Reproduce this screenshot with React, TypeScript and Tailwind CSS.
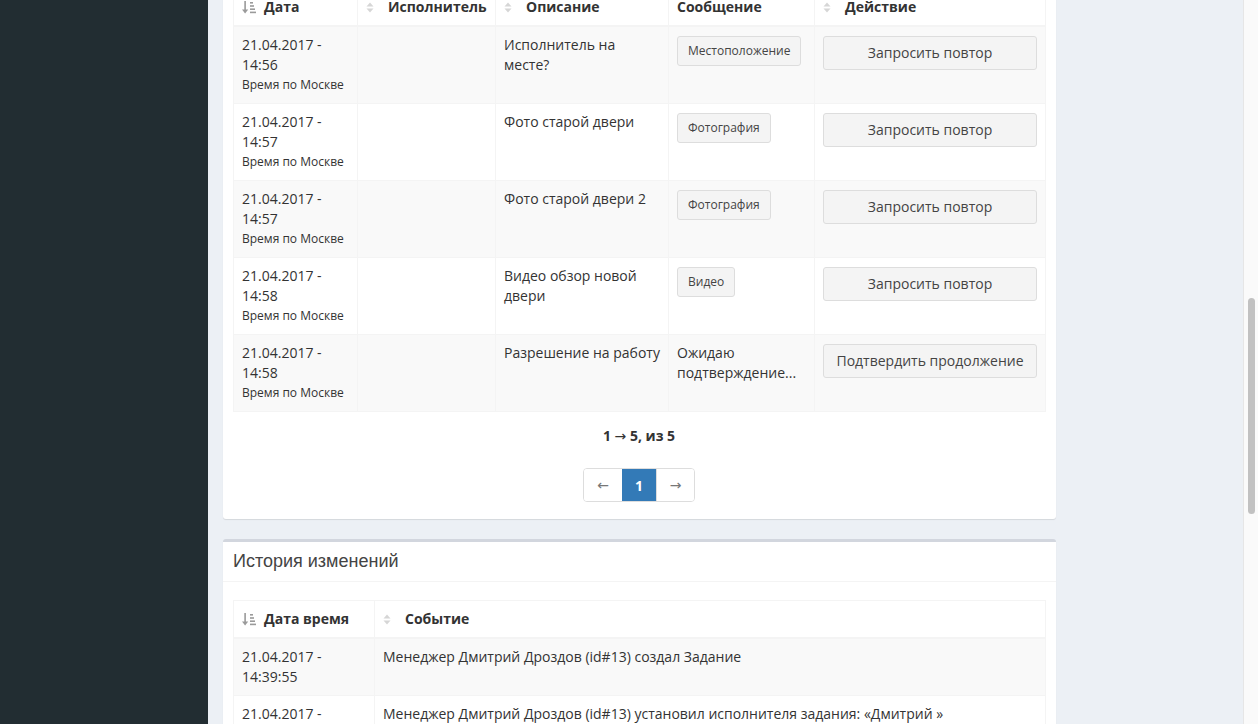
import React from "react";

const SortAsc = () => (
  <svg width="14" height="13" viewBox="0 0 14 13" className="shrink-0">
    <rect x="2.3" y="0" width="1.6" height="9" fill="#9a9a9a" />
    <polygon points="0,8.5 6.2,8.5 3.1,12.5" fill="#9a9a9a" />
    <rect x="8" y="1" width="3" height="1.6" fill="#9a9a9a" />
    <rect x="8" y="4.2" width="4" height="1.6" fill="#9a9a9a" />
    <rect x="8" y="7.4" width="5" height="1.6" fill="#9a9a9a" />
    <rect x="8" y="10.6" width="6" height="1.6" fill="#9a9a9a" />
  </svg>
);

const SortBoth = () => (
  <svg width="14" height="13" viewBox="0 0 14 13" className="shrink-0">
    <polygon points="0.5,5.5 7.5,5.5 4,1.5" fill="#d6d6d6" />
    <polygon points="0.5,7.5 7.5,7.5 4,11.5" fill="#d6d6d6" />
  </svg>
);

type Row = {
  time: string;
  desc: string[];
  msgBtn?: string;
  msgText?: string[];
  action: string;
};

const rows: Row[] = [
  { time: "14:56", desc: ["Исполнитель на", "месте?"], msgBtn: "Местоположение", action: "Запросить повтор" },
  { time: "14:57", desc: ["Фото старой двери"], msgBtn: "Фотография", action: "Запросить повтор" },
  { time: "14:57", desc: ["Фото старой двери 2"], msgBtn: "Фотография", action: "Запросить повтор" },
  { time: "14:58", desc: ["Видео обзор новой", "двери"], msgBtn: "Видео", action: "Запросить повтор" },
  { time: "14:58", desc: ["Разрешение на работу"], msgText: ["Ожидаю", "подтверждение..."], action: "Подтвердить продолжение" },
];

const th = "border border-[#f4f4f4] border-b-2 px-[8px] py-[8px] text-left font-bold align-bottom leading-[20px]";
const td = "border border-[#f4f4f4] px-[8px] pt-[8px] pb-[8px] align-top leading-[20px]";

export default function App() {
  return (
    <div className="flex h-[724px] w-full overflow-hidden font-['Open_Sans',sans-serif] text-[14px] text-[#333]">
      <div className="w-[208px] shrink-0 bg-[#222d32]" />
      <div className="flex-1 bg-[#ecf0f5] pl-[15px] overflow-hidden">
        {/* Card 1 */}
        <div className="mt-[-22px] w-[833px] rounded-[3px] bg-white py-[10px] pl-[10px] pr-[11px] pb-[17px] shadow-[0_1px_1px_rgba(0,0,0,0.1)]">
          <table className="w-[812px] table-fixed border-collapse">
            <colgroup>
              <col className="w-[124px]" />
              <col className="w-[138px]" />
              <col className="w-[173px]" />
              <col className="w-[146px]" />
              <col className="w-[231px]" />
            </colgroup>
            <thead>
              <tr className="bg-white">
                <th className={th}>
                  <div className="flex items-center gap-[8px]"><SortAsc /><span>Дата</span></div>
                </th>
                <th className={th}>
                  <div className="flex items-center gap-[8px]"><SortBoth /><span>Исполнитель</span></div>
                </th>
                <th className={th}>
                  <div className="flex items-center gap-[8px]"><SortBoth /><span>Описание</span></div>
                </th>
                <th className={th}>
                  <span>Сообщение</span>
                </th>
                <th className={th}>
                  <div className="flex items-center gap-[8px]"><SortBoth /><span>Действие</span></div>
                </th>
              </tr>
            </thead>
            <tbody>
              {rows.map((r, i) => (
                <tr key={i} className={i % 2 === 0 ? "bg-[#f9f9f9]" : "bg-white"}>
                  <td className={td}>
                    <div className="whitespace-nowrap">21.04.2017 -</div>
                    <div className="whitespace-nowrap">{r.time}</div>
                    <div className="whitespace-nowrap text-[12px] leading-[20px]">Время по Москве</div>
                  </td>
                  <td className={td}></td>
                  <td className={td}>
                    {r.desc.map((l, j) => (
                      <div key={j} className="whitespace-nowrap">{l}</div>
                    ))}
                  </td>
                  <td className={td}>
                    {r.msgBtn ? (
                      <div className="pt-[1px]">
                        <span className="inline-block rounded-[3px] border border-[#ddd] bg-[#f4f4f4] px-[10px] py-[5px] text-[12px] leading-[18px] text-[#444]">
                          {r.msgBtn}
                        </span>
                      </div>
                    ) : (
                      r.msgText?.map((l, j) => (
                        <div key={j} className="whitespace-nowrap">{l}</div>
                      ))
                    )}
                  </td>
                  <td className={td}>
                    <div className="pt-[1px]">
                      <div className="w-full whitespace-nowrap rounded-[3px] border border-[#ddd] bg-[#f4f4f4] px-[6px] py-[6px] text-center leading-[20px] text-[#444]">
                        {r.action}
                      </div>
                    </div>
                  </td>
                </tr>
              ))}
            </tbody>
          </table>

          <div className="mt-[14px] text-center font-bold leading-[20px]">
            1 <span className="font-['DejaVu_Sans',sans-serif] font-normal">→</span> 5, из 5
          </div>

          <div className="mt-[22px] flex justify-center">
            <div className="flex h-[34px] overflow-hidden rounded-[4px] border border-[#ddd] font-['DejaVu_Sans',sans-serif]">
              <div className="flex w-[38px] items-center justify-center bg-white text-[#777]">←</div>
              <div className="flex w-[34px] items-center justify-center bg-[#337ab7] font-['Open_Sans',sans-serif] font-bold text-white">1</div>
              <div className="flex w-[38px] items-center justify-center border-l border-[#ddd] bg-white text-[#777]">→</div>
            </div>
          </div>
        </div>

        {/* Card 2 */}
        <div className="mt-[20px] w-[833px] rounded-[3px] border-t-[3px] border-[#d2d6de] bg-white shadow-[0_1px_1px_rgba(0,0,0,0.1)]">
          <div className="border-b border-[#f4f4f4] px-[10px] pt-[9px] pb-[10px]">
            <h3 className="font-['Liberation_Sans',Arial,sans-serif] text-[18px] leading-[20px] text-[#444]">
              История изменений
            </h3>
          </div>
          <div className="pl-[10px] pr-[11px] pt-[18px] pb-[10px]">
            <table className="w-[812px] table-fixed border-collapse">
              <colgroup>
                <col className="w-[141px]" />
                <col className="w-[671px]" />
              </colgroup>
              <thead>
                <tr className="bg-white">
                  <th className={th}>
                    <div className="flex items-center gap-[8px]"><SortAsc /><span>Дата время</span></div>
                  </th>
                  <th className={th}>
                    <div className="flex items-center gap-[8px]"><SortBoth /><span>Событие</span></div>
                  </th>
                </tr>
              </thead>
              <tbody>
                <tr className="bg-[#f9f9f9]">
                  <td className={td}>
                    <div className="whitespace-nowrap">21.04.2017 -</div>
                    <div className="whitespace-nowrap">14:39:55</div>
                  </td>
                  <td className={td}>Менеджер Дмитрий Дроздов (id#13) создал Задание</td>
                </tr>
                <tr className="bg-white">
                  <td className={td}>
                    <div className="whitespace-nowrap">21.04.2017 -</div>
                    <div className="whitespace-nowrap">14:40:12</div>
                  </td>
                  <td className={td}>
                    <div>Менеджер Дмитрий Дроздов (id#13) установил исполнителя задания: «Дмитрий »</div>
                    <div>(id#14)</div>
                  </td>
                </tr>
              </tbody>
            </table>
          </div>
        </div>
      </div>
      <div className="w-[15px] shrink-0 border-l border-[#e6e6e6] bg-[#fafafa] pt-[298px]">
        <div className="mx-auto h-[216px] w-[7px] rounded-full bg-[#c1c1c1]" />
      </div>
    </div>
  );
}
